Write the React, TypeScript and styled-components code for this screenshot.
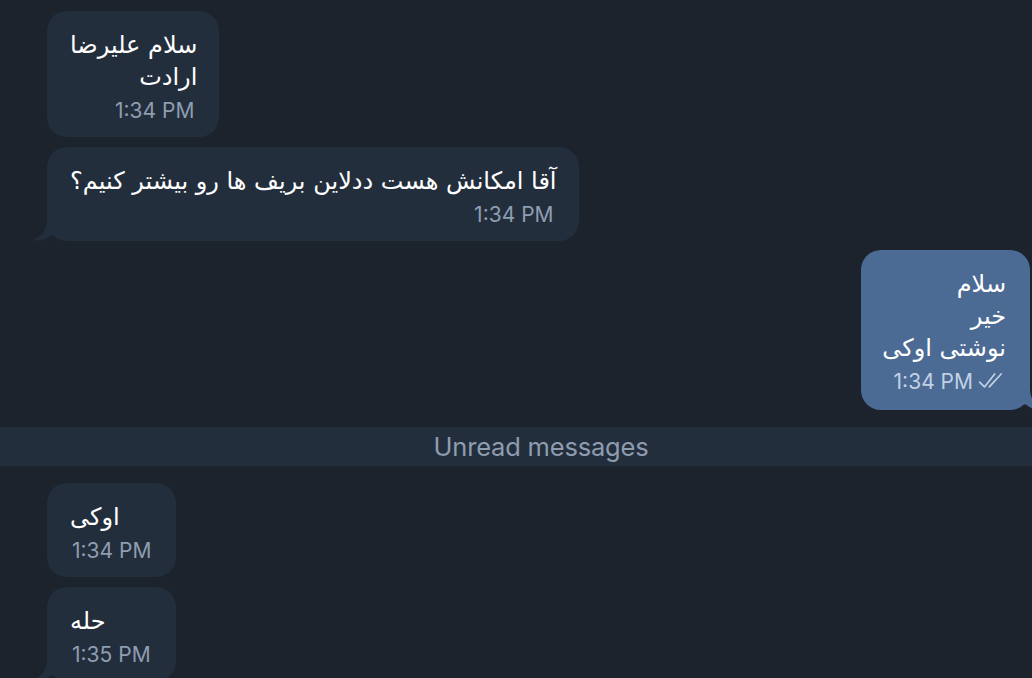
import styled, { createGlobalStyle } from "styled-components";

const GlobalStyle = createGlobalStyle`
  html, body {
    margin: 0;
    padding: 0;
    background: #1c232c;
    overflow: hidden;
  }
  body {
    font-family: "Inter", "DejaVu Sans", sans-serif;
  }
`;

const Chat = styled.div`
  width: 1032px;
  height: 678px;
  display: flex;
  flex-direction: column;
  padding-top: 11px;
  box-sizing: border-box;
  overflow: hidden;
`;

const Row = styled.div<{ $out?: boolean; $gap: number }>`
  flex-shrink: 0;
  display: flex;
  justify-content: ${(p) => (p.$out ? "flex-end" : "flex-start")};
  padding: ${(p) => (p.$out ? "0 2px 0 0" : "0 0 0 47px")};
  margin-top: ${(p) => p.$gap}px;
`;

const Bubble = styled.div<{ $out?: boolean }>`
  position: relative;
  display: flex;
  flex-direction: column;
  align-items: flex-start;
  background: ${(p) => (p.$out ? "#4b6a94" : "#232e3d")};
  border-radius: 20px;
  padding: ${(p) => (p.$out ? "18px 24px 16px 21px" : "18px 22px 14px 23px")};
`;

const Text = styled.div`
  direction: rtl;
  text-align: right;
  white-space: pre;
  font-family: "DejaVu Sans", sans-serif;
  font-size: 24px;
  line-height: 32px;
  color: #ffffff;
`;

const Meta = styled.div<{ $out?: boolean }>`
  align-self: flex-end;
  display: flex;
  align-items: center;
  gap: 5px;
  margin: 4px ${(p) => (p.$out ? "0" : "3px")} 0 2px;
  height: 26px;
  font-family: "Inter", sans-serif;
  font-size: 21px;
  color: ${(p) => (p.$out ? "#c3d1e4" : "#8e9db0")};
`;

const Tail = styled.svg<{ $out?: boolean }>`
  position: absolute;
  bottom: 0;
  width: 22px;
  height: 22px;
  ${(p) => (p.$out ? "right: -14px;" : "left: -14px; transform: scaleX(-1);")}
`;

const UnreadBar = styled.div`
  flex-shrink: 0;
  margin-top: 17px;
  height: 39px;
  background: #232e3c;
  display: flex;
  align-items: center;
  justify-content: center;
  padding-left: 50px;
  font-family: "Inter", sans-serif;
  font-size: 25.5px;
  letter-spacing: -0.2px;
  color: #8e9cb0;
`;

function BubbleTail({ out, color }: { out?: boolean; color: string }) {
  return (
    <Tail $out={out} viewBox="0 0 22 22">
      <path
        d="M0 0 L8 0 C8 10 12 17 22 21 C15 22.5 9 21 4 16.5 L0 16.5 Z"
        fill={color}
      />
    </Tail>
  );
}

function Checks() {
  return (
    <svg width="28" height="18" viewBox="0 0 26 16" fill="none">
      <path
        d="M1.5 9 L6 13.5 L15.5 1.5"
        stroke="#c3d1e4"
        strokeWidth="1.6"
        strokeLinecap="round"
        strokeLinejoin="round"
      />
      <path
        d="M10.5 13.5 L21.5 1.5"
        stroke="#c3d1e4"
        strokeWidth="1.6"
        strokeLinecap="round"
      />
    </svg>
  );
}

interface MessageProps {
  text: string;
  time: string;
  out?: boolean;
  tail?: boolean;
  gap: number;
}

function Message({ text, time, out, tail, gap }: MessageProps) {
  return (
    <Row $out={out} $gap={gap}>
      <Bubble $out={out}>
        {tail && <BubbleTail out={out} color={out ? "#4b6a94" : "#232e3d"} />}
        <Text>{text}</Text>
        <Meta $out={out}>
          <span>{time}</span>
          {out && <Checks />}
        </Meta>
      </Bubble>
    </Row>
  );
}

export default function App() {
  return (
    <>
      <GlobalStyle />
      <Chat>
        <Message gap={0} text={"سلام علیرضا\nارادت"} time="1:34 PM" />
        <Message
          gap={10}
          tail
          text="آقا امکانش هست ددلاین بریف ها رو بیشتر کنیم؟"
          time="1:34 PM"
        />
        <Message gap={9} out tail text={"سلام\nخیر\nنوشتی اوکی"} time="1:34 PM" />
        <UnreadBar>Unread messages</UnreadBar>
        <Message gap={17} text="اوکی" time="1:34 PM" />
        <Message gap={10} tail text="حله" time="1:35 PM" />
      </Chat>
    </>
  );
}
